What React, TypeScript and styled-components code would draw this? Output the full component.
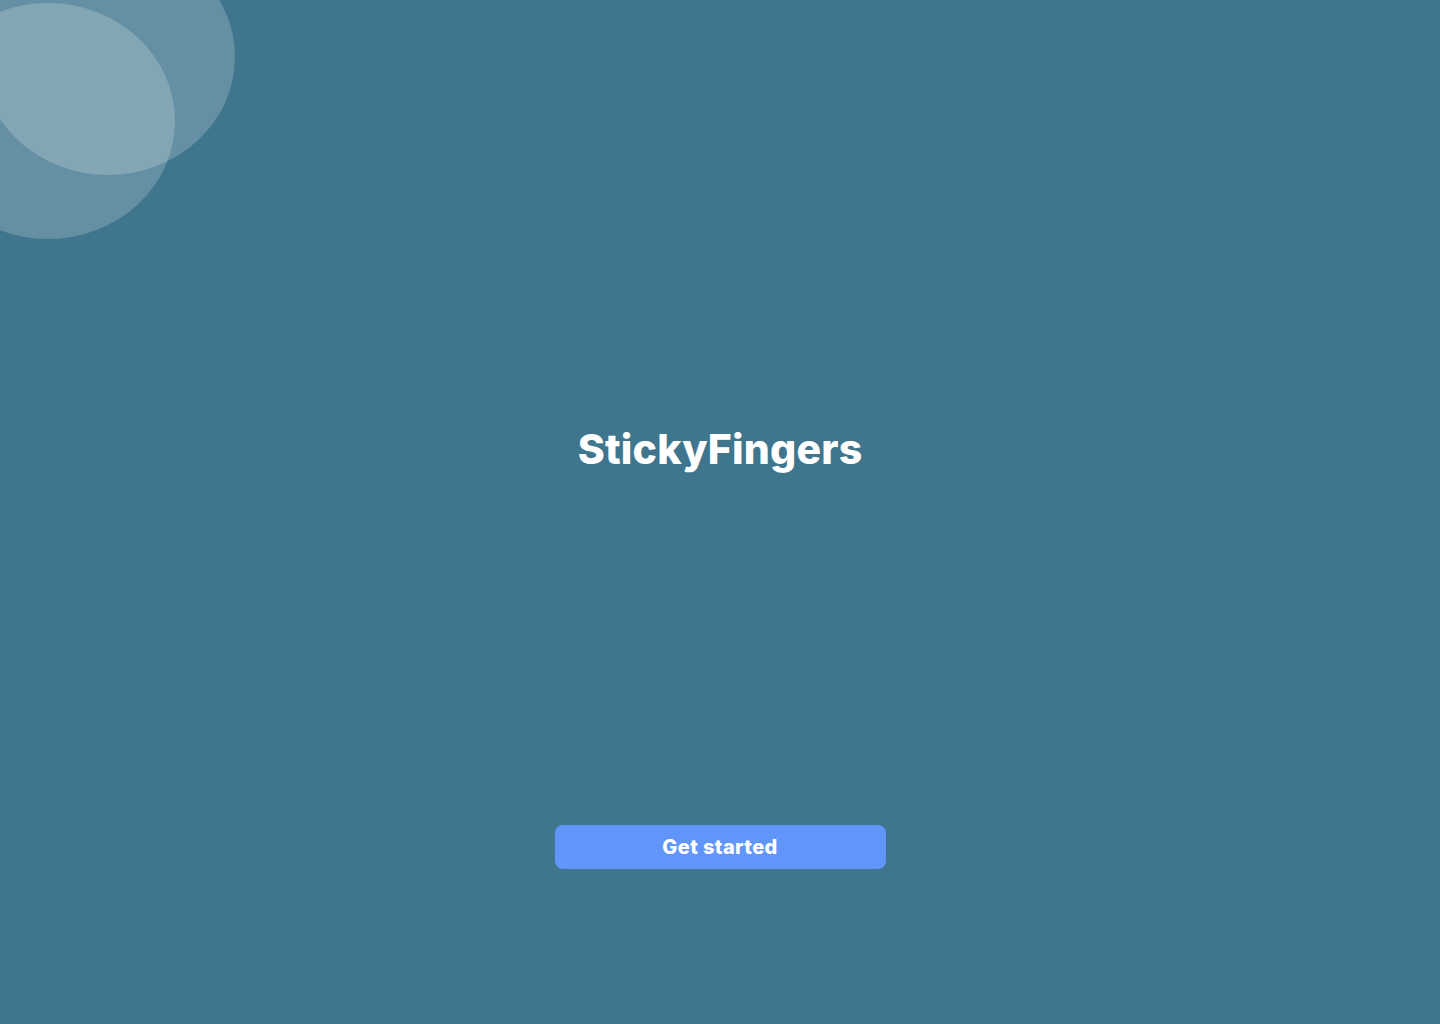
import React from "react";
import styled, { createGlobalStyle } from "styled-components";

const Global = createGlobalStyle`
  html, body { margin: 0; padding: 0; }
  body { background: #3f758d; font-family: Inter, "Noto Sans", sans-serif; }
  * { box-sizing: border-box; }
`;

const Page = styled.div`
  position: relative;
  width: 100%;
  height: 1024px;
  overflow: hidden;
  background: #3f758d;
  display: flex;
  flex-direction: column;
  align-items: center;
`;

const Blob = styled.div<{ $cx: number; $cy: number }>`
  position: absolute;
  width: 254px;
  height: 236px;
  border-radius: 50%;
  background: rgba(255, 255, 255, 0.2);
  left: ${(p) => p.$cx - 127}px;
  top: ${(p) => p.$cy - 118}px;
`;

const Title = styled.h1`
  margin: 421px 0 0;
  font-family: Inter, sans-serif;
  font-weight: 800;
  font-size: 41px;
  line-height: 56px;
  color: #ffffff;
  letter-spacing: 0.2px;
`;

const Button = styled.button`
  margin-top: 348px;
  width: 331px;
  height: 44px;
  border: none;
  border-radius: 8px;
  background: #6096fa;
  color: #ffffff;
  font-family: Inter, sans-serif;
  font-weight: 800;
  font-size: 20px;
  letter-spacing: 0.4px;
  cursor: pointer;
`;

export default function App() {
  return (
    <>
      <Global />
      <Page>
        <Blob $cx={108} $cy={57} />
        <Blob $cx={48} $cy={121} />
        <Title>StickyFingers</Title>
        <Button>Get started</Button>
      </Page>
    </>
  );
}
